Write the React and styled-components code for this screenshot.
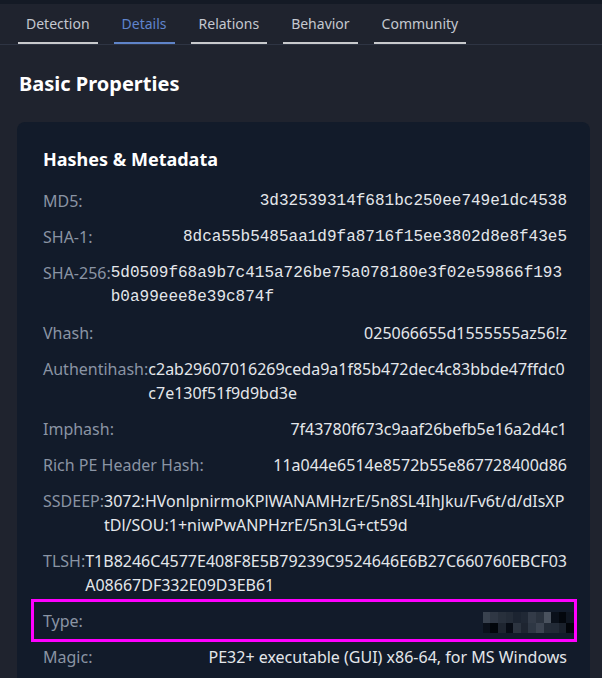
import styled, { createGlobalStyle } from 'styled-components'

const GlobalStyle = createGlobalStyle`
  html, body {
    margin: 0;
    padding: 0;
    background: #1f232e;
  }
  body {
    font-family: "Noto Sans", "Open Sans", sans-serif;
    overflow: hidden;
  }
`

const tabs = ['Detection', 'Details', 'Relations', 'Behavior', 'Community']

const rows = [
  { label: 'MD5:', value: '3d32539314f681bc250ee749e1dc4538', mono: true },
  { label: 'SHA-1:', value: '8dca55b5485aa1d9fa8716f15ee3802d8e8f43e5', mono: true },
  { label: 'SHA-256:', value: '5d0509f68a9b7c415a726be75a078180e3f02e59866f193b0a99eee8e39c874f', mono: true },
  { label: 'Vhash:', value: '025066655d1555555az56!z' },
  { label: 'Authentihash:', value: 'c2ab29607016269ceda9a1f85b472dec4c83bbde47ffdc0c7e130f51f9d9bd3e' },
  { label: 'Imphash:', value: '7f43780f673c9aaf26befb5e16a2d4c1' },
  { label: 'Rich PE Header Hash:', value: '11a044e6514e8572b55e867728400d86' },
  { label: 'SSDEEP:', value: '3072:HVonlpnirmoKPlWANAMHzrE/5n8SL4IhJku/Fv6t/d/dIsXPtDl/SOU:1+niwPwANPHzrE/5n3LG+ct59d' },
  { label: 'TLSH:', value: 'T1B8246C4577E408F8E5B79239C9524646E6B27C660760EBCF03A08667DF332E09D3EB61' },
  { label: 'Type:', blurred: true },
  { label: 'Magic:', value: 'PE32+ executable (GUI) x86-64, for MS Windows' },
]

// redacted value, drawn as a pixel mosaic
const mosaic = [
  ['#39424f', '#2f3744', '#28303c', '#242c38', '#1c2431', '#202835', '#333b48', '#2a323e', '#4a525e', '#0a101a', '#03070d', '#0f1621'],
  ['#0b111b', '#02060b', '#1e2530', '#070c15', '#2c3440', '#1e2531', '#2e3744', '#3c4451', '#232b37', '#222a36', '#1a212c', '#02050a'],
]

export default function App() {
  return (
    <Page>
      <GlobalStyle />
      <TopStrip />
      <TabBar>
        {tabs.map((t) => (
          <Tab key={t} $active={t === 'Details'}>{t}</Tab>
        ))}
      </TabBar>
      <Content>
        <SectionTitle>Basic Properties</SectionTitle>
        <Card>
          <CardTitle>Hashes &amp; Metadata</CardTitle>
          {rows.map((r) => (
            <Row key={r.label} $highlight={r.blurred}>
              <Label>{r.label}</Label>
              {r.blurred ? (
                <Mosaic>
                  {mosaic.flat().map((c, i) => (
                    <Cell key={i} $c={c} />
                  ))}
                </Mosaic>
              ) : (
                <Value $mono={r.mono}>{r.value}</Value>
              )}
            </Row>
          ))}
        </Card>
      </Content>
    </Page>
  )
}

const Page = styled.div`
  height: 100vh;
  width: 100vw;
  background: #1f232e;
  overflow: hidden;
`

const TopStrip = styled.div`
  height: 4px;
  background: #141a25;
`

const TabBar = styled.nav`
  display: flex;
  gap: 16px;
  padding-left: 18px;
  height: 40px;
  border-bottom: 1px solid #2e3443;
`

const Tab = styled.div`
  display: flex;
  align-items: center;
  padding: 1px 8px 0;
  font-size: 14px;
  color: ${(p) => (p.$active ? '#5f84cc' : '#c4c8d0')};
  border-bottom: 2px solid ${(p) => (p.$active ? '#5f84c9' : '#c8c9cc')};
`

const Content = styled.main`
  padding: 25px 12px 0 17px;
`

const SectionTitle = styled.h2`
  margin: 0 0 24px 2px;
  font-size: 20px;
  line-height: 28px;
  font-weight: 700;
  color: #ffffff;
`

const Card = styled.section`
  background: #121b2a;
  border-radius: 8px;
  padding: 24px 23px 20px 26px;
`

const CardTitle = styled.h3`
  margin: 0 0 11px;
  font-size: 18px;
  line-height: 26px;
  font-weight: 700;
  color: #ffffff;
`

const Row = styled.div`
  position: relative;
  display: flex;
  justify-content: space-between;
  padding: 6px 0;
  font-size: 16px;
  line-height: 24px;

  ${(p) =>
    p.$highlight &&
    `
    &::after {
      content: '';
      position: absolute;
      top: -4px;
      bottom: -3px;
      left: -12px;
      right: -10px;
      border: 3px solid #ff00ff;
      pointer-events: none;
    }
  `}
`

const Label = styled.span`
  flex-shrink: 0;
  white-space: nowrap;
  color: #8a94a4;
`

const Value = styled.span`
  min-width: 0;
  word-break: break-all;
  color: #e4e7eb;
  font-family: ${(p) => (p.$mono ? '"Liberation Mono", monospace' : 'inherit')};
`

const Mosaic = styled.div`
  display: grid;
  grid-template-columns: repeat(12, 7.6px);
  grid-auto-rows: 10.5px;
  margin: 3px -7px 0 0;
`

const Cell = styled.div`
  background: ${(p) => p.$c};
`
